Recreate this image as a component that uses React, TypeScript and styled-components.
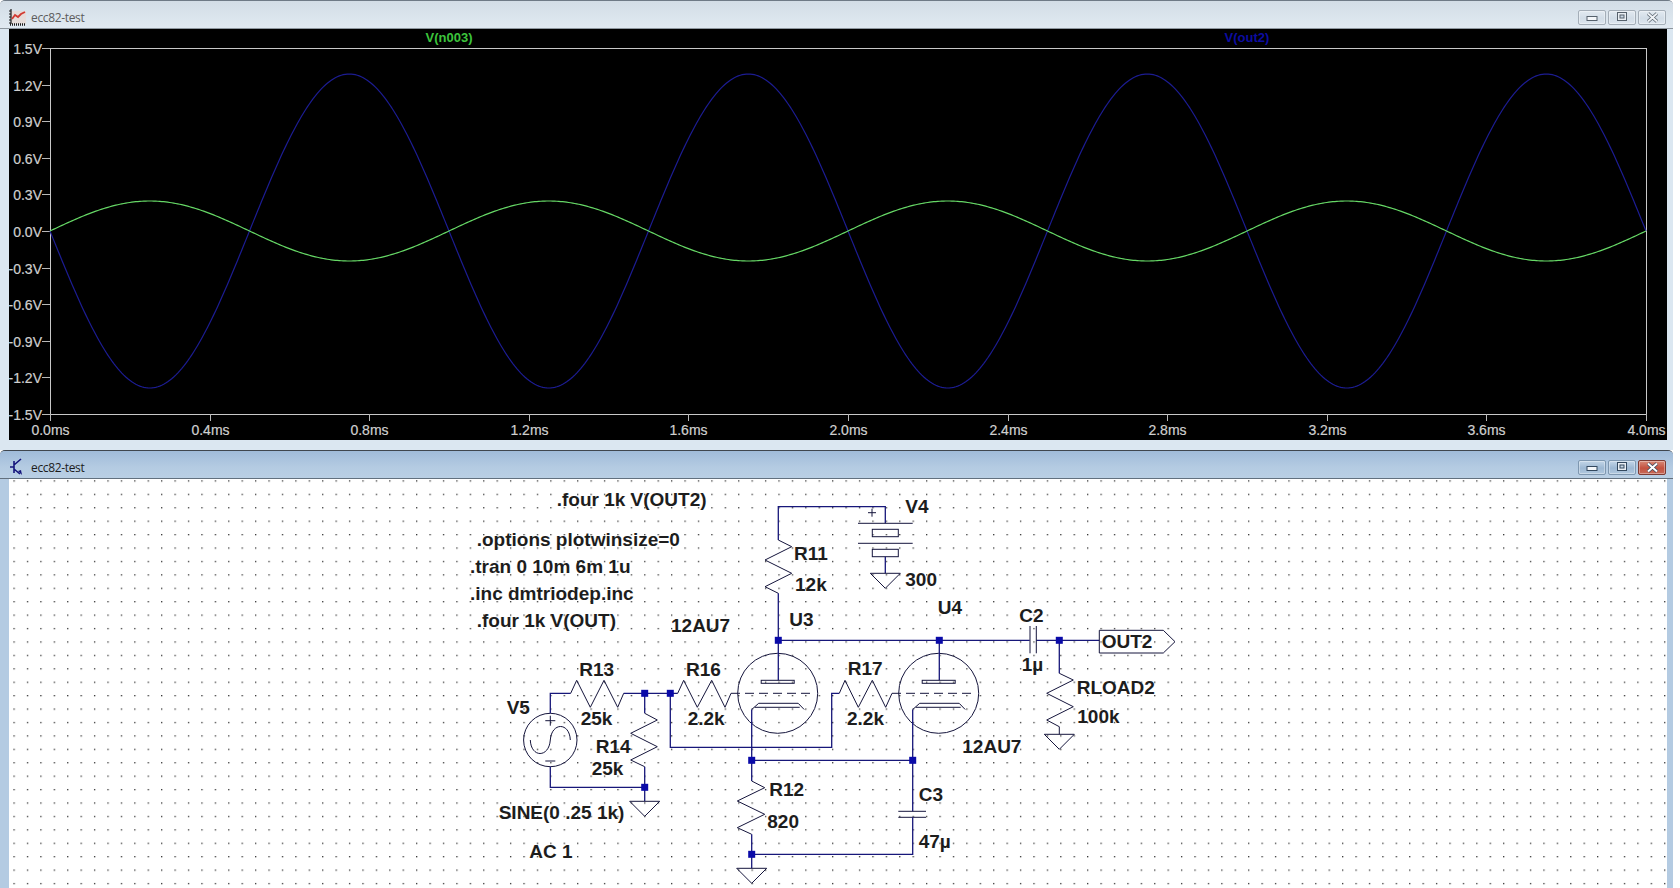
import React from "react";
import styled, { createGlobalStyle } from "styled-components";

const Global = createGlobalStyle`
  html, body { margin: 0; padding: 0; background: #fff; overflow: hidden; }
  #root { width: 1680px; height: 888px; }
`;

const Page = styled.div`
  width: 1680px; height: 888px; display: flex; flex-direction: column; overflow: hidden; background: #fff;
`;
const Win = styled.section<{ $active?: boolean; $h: number }>`
  width: 1673px; height: ${p => p.$h}px; flex: none; display: flex; flex-direction: column; box-sizing: border-box;
  border-top: 1px solid ${p => (p.$active ? "#3f464e" : "#6f7a86")};
  border-radius: 5px 5px 0 0;
  overflow: hidden;
  background: ${p => (p.$active ? "#b4cbe2" : "#dbe7f1")};
`;
const TitleBar = styled.header<{ $active?: boolean }>`
  height: 28px; flex: none; display: flex; align-items: center; box-sizing: border-box; padding: 5px 7px 0 9px;
  background: ${p => (p.$active
    ? "linear-gradient(#a0bbd9, #b4cbe2 60%, #b9cfe4)"
    : "linear-gradient(#d3dde6, #dce6ee 70%, #e0e9f1)")};
  border-bottom: 1px solid ${p => (p.$active ? "#62707e" : "#8e979f")};
`;
const TitleText = styled.span<{ $active?: boolean }>`
  font: 12px "Open Sans", "Noto Sans", sans-serif; letter-spacing: -0.35px; margin-left: 4px; flex: 1;
  color: ${p => (p.$active ? "#1c1c1c" : "#5c5c5c")};
`;
const Buttons = styled.div`display: flex; gap: 2px;`;
const WinButton = styled.div<{ $kind: string; $active?: boolean }>`
  width: 28px; height: 15px; box-sizing: border-box; border-radius: 2px;
  display: flex; align-items: center; justify-content: center;
  border: 1px solid ${p => (p.$kind === "close" && p.$active ? "#7d3a32" : p.$active ? "#7e97b0" : "#a4aeb8")};
  background: ${p => (p.$kind === "close" && p.$active
    ? "linear-gradient(#d88a78, #c4513f 55%, #c66a58)"
    : p.$active
      ? "linear-gradient(#c3d6e8, #9db8d3 55%, #b2c9df)"
      : "linear-gradient(#e2eaf1, #d2dde7 55%, #dde6ee)")};
  box-shadow: inset 0 0 0 1px rgba(255,255,255,.35);
`;
const Body = styled.div`
  flex: 1; min-height: 0; display: flex; padding: 0 6px 0 9px;
`;
const PlotPane = styled.div`
  width: 1658px; height: 411px; background: #000; flex: none;
`;
const SchematicPane = styled.div`
  width: 1658px; height: 409px; background: #fff; flex: none;
`;
const Drawing = styled.svg`display: block;`;

const Tick = styled.text<{ $anchor: string }>`
  font: 14px "Liberation Sans", Arial, sans-serif; fill: #cfcfcf; text-anchor: ${p => p.$anchor};
  stroke: #cfcfcf; stroke-width: 0.2;
`;
const TraceName = styled.text<{ $color: string }>`
  font: bold 13px "Liberation Sans", Arial, sans-serif; fill: ${p => p.$color}; text-anchor: middle;
`;
const Label = styled.text`
  font: bold 19px "Liberation Sans", Arial, sans-serif; fill: #1d1d1d;
`;
const WireLine = styled.polyline`fill: none; stroke: #17177a; stroke-width: 1.3;`;
const PartLine = styled.polyline<{ $dash?: boolean }>`
  fill: none; stroke: #15153c; stroke-width: 1; ${p => (p.$dash ? "stroke-dasharray: 9 5;" : "")}
`;
const PartRect = styled.rect`fill: none; stroke: #15153c; stroke-width: 1;`;
const PartCircle = styled.circle`fill: none; stroke: #15153c; stroke-width: 1;`;
const JunctionDot = styled.rect`fill: #0a0aa8;`;

type P = [number, number][];
const pts = (p: P) => p.map(a => a.join(",")).join(" ");
const Wire = ({ p }: { p: P }) => <WireLine points={pts(p)} />;
const Part = ({ p, dash }: { p: P; dash?: boolean }) => <PartLine points={pts(p)} $dash={dash} />;
const J = ({ x, y }: { x: number; y: number }) => <JunctionDot x={x - 3.5} y={y - 3.5} width={7} height={7} />;
const Gnd = ({ x, y }: { x: number; y: number }) => <Part p={[[x - 15, y], [x + 15, y], [x, y + 15], [x - 15, y]]} />;

const Tube = ({ cx, wireX, gridFrom }: { cx: number; wireX: number; gridFrom: number }) => {
  const y = 693.3;
  return (
    <g>
      <PartCircle cx={cx} cy={y} r={40} />
      <Wire p={[[cx + 0.6, 640.3], [cx + 0.6, 680.3]]} />
      <PartRect x={cx - 16.5} y={680.3} width={33} height={3} />
      <Part p={[[gridFrom, y], [cx + 33, y]]} dash />
      <Part p={[[wireX, 709.5], [wireX + 7, 703.3], [cx + 20.5, 703.3], [cx + 26.5, 709.5]]} />
      <Part p={[[wireX + 3, 707.3], [cx + 22, 707.3]]} />
    </g>
  );
};

const H = (x0: number, xs: number[], ys: number[]): P => xs.map((d, i) => [x0 + d, ys[i]]);

const labels: [string, number, number][] = [
  [".four 1k V(OUT2)", 556.7, 506],
  [".options plotwinsize=0", 476.7, 546],
  [".tran 0 10m 6m 1u", 470, 573.3],
  [".inc dmtriodep.inc", 470, 600],
  [".four 1k V(OUT)", 476.7, 627.3],
  ["12AU7", 671, 632],
  ["U3", 789.3, 625.7],
  ["R11", 794, 560],
  ["12k", 795, 590.7],
  ["R13", 579.3, 675.7],
  ["R16", 686, 675.7],
  ["R17", 847.7, 675],
  ["25k", 580.7, 725],
  ["2.2k", 687.7, 725],
  ["2.2k", 847, 725],
  ["V5", 506.7, 714],
  ["R14", 595.7, 753.3],
  ["25k", 591.7, 774.7],
  ["SINE(0 .25 1k)", 498.7, 819.3],
  ["AC 1", 529.3, 858.3],
  ["R12", 769.3, 796],
  ["820", 767.3, 827.7],
  ["C3", 918.7, 800.7],
  ["47µ", 918.7, 847.7],
  ["12AU7", 962.3, 753.3],
  ["V4", 905.3, 512.7],
  ["300", 905.3, 586],
  ["U4", 937.7, 614.3],
  ["C2", 1019.3, 621.7],
  ["OUT2", 1101.7, 647.7],
  ["1µ", 1021.7, 670.7],
  ["RLOAD2", 1076.7, 694],
  ["100k", 1077.3, 723.3],
];

const trace = (amp: number, sign: number) => {
  const out: string[] = [];
  for (let i = 0; i <= 800; i++) {
    const t = i / 200;
    out.push(`${(50 + 399 * t).toFixed(2)},${(231 - sign * amp * Math.sin(2 * Math.PI * t)).toFixed(2)}`);
  }
  return out.join(" ");
};

const PlotTrace = styled.polyline<{ $color: string; $w: number }>`fill: none; stroke: ${p => p.$color}; stroke-width: ${p => p.$w};`;
const AxisBox = styled.rect`fill: none; stroke: #c8c8c8; stroke-width: 1;`;
const AxisTick = styled.line`stroke: #b8b8b8; stroke-width: 1;`;

const yTicks = [1.5, 1.2, 0.9, 0.6, 0.3, 0, -0.3, -0.6, -0.9, -1.2, -1.5];
const xTicks = Array.from({ length: 11 }, (_, i) => i * 0.4);

const Plot = () => (
  <Drawing width={1658} height={411} viewBox="9 29 1658 411">
    <TraceName x={449} y={42} $color="#3cc43c">V(n003)</TraceName>
    <TraceName x={1247} y={42} $color="#0c0ca0">V(out2)</TraceName>
    <AxisBox x={50.5} y={48.5} width={1596} height={366} />
    {yTicks.map(v => {
      const y = Math.round(231 - v * 122) + 0.5;
      return (
        <g key={v}>
          <AxisTick x1={42} x2={50} y1={y} y2={y} />
          <Tick x={42} y={y + 5} $anchor="end">{v.toFixed(1)}V</Tick>
        </g>
      );
    })}
    {xTicks.map(v => {
      const x = Math.round(50 + v * 399) + 0.5;
      return (
        <g key={v}>
          <AxisTick x1={x} x2={x} y1={414} y2={421} />
          <Tick x={x} y={435} $anchor="middle">{v.toFixed(1)}ms</Tick>
        </g>
      );
    })}
    <PlotTrace points={trace(157, -1)} $color="#1c1c92" $w={1.2} />
    <PlotTrace points={trace(30, 1)} $color="#66d866" $w={1.2} />
  </Drawing>
);

const Schematic = () => (
  <Drawing width={1658} height={409} viewBox="9 479 1658 409">
    <defs>
      <pattern id="grid" x={0} y={480.3} width={13.42} height={13.42} patternUnits="userSpaceOnUse">
        <rect x={0} y={0} width={1.3} height={1.3} fill="#333" />
      </pattern>
    </defs>
    <rect x={9} y={479} width={1658} height={409} fill="url(#grid)" />

    {/* supply */}
    <Wire p={[[778.3, 540], [778.3, 506.7], [885.3, 506.7], [885.3, 523.3]]} />
    <Part p={[[858, 523.3], [912.7, 523.3]]} />
    <Part p={[[858, 543.3], [912.7, 543.3]]} />
    <PartRect x={872.3} y={529.3} width={26} height={7.4} />
    <PartRect x={872.3} y={549.3} width={26} height={7.4} />
    <Part p={[[868, 512.7], [876, 512.7]]} />
    <Part p={[[872, 508.7], [872, 516.7]]} />
    <Wire p={[[885.3, 556.7], [885.3, 573.3]]} />
    <Gnd x={885.3} y={573.3} />

    {/* R11 */}
    <Part p={[[778.3, 540], [791.7, 546.7], [765, 560], [791.7, 573.3], [765, 586.7], [778.3, 593.3]]} />
    <Wire p={[[778.3, 593.3], [778.3, 640.3]]} />

    {/* plate bus to output */}
    <Wire p={[[778.3, 640.3], [1029.7, 640.3]]} />
    <Wire p={[[1036.3, 640.3], [1099.3, 640.3]]} />
    <Part p={[[1030, 626], [1030, 653.3]]} />
    <Part p={[[1036.3, 626], [1036.3, 653.3]]} />
    <Part p={[[1099.3, 630.3], [1163.3, 630.3], [1175, 641.7], [1163.3, 653], [1099.3, 653], [1099.3, 630.3]]} />

    {/* RLOAD2 */}
    <Wire p={[[1059.3, 640.3], [1059.3, 673.3]]} />
    <Part p={[[1059.3, 673.3], [1073.3, 680], [1046.7, 693.3], [1073.3, 706.7], [1046.7, 720], [1059.3, 726.7], [1059.3, 734.3]]} />
    <Gnd x={1059.3} y={734.3} />

    {/* input */}
    <PartCircle cx={550.3} cy={740} r={26.7} />
    <Part p={[[545.3, 720.7], [555.3, 720.7]]} />
    <Part p={[[550.3, 715.7], [550.3, 725.7]]} />
    <Part p={[[545.3, 761], [555.3, 761]]} />
    <path d="M530.3 740 C531 758 549 758 550.3 740 C551.6 722 569.6 722 570.3 740" fill="none" stroke="#15153c" strokeWidth={1} />
    <Wire p={[[550.3, 713.3], [550.3, 693.3], [570.7, 693.3]]} />
    <Part p={[[570.7, 693.3], [576.7, 680.3], [590.3, 707.3], [604, 680.3], [617.7, 707.3], [623.7, 693.3]]} />
    <Wire p={[[623.7, 693.3], [677.7, 693.3]]} />
    <Wire p={[[644.7, 693.3], [644.7, 713.3]]} />
    <Part p={[[644.7, 713.3], [657.3, 720], [630.7, 733.3], [657.3, 746.7], [630.7, 760], [644.7, 766.7]]} />
    <Wire p={[[644.7, 766.7], [644.7, 801.3]]} />
    <Wire p={[[550.3, 766.7], [550.3, 787.3], [644.7, 787.3]]} />
    <Gnd x={644.7} y={801.3} />

    {/* R16, R17 */}
    <Part p={H(0, [677.7, 683.7, 697.3, 711.7, 725, 731], [693.3, 680.3, 707.3, 680.3, 707.3, 693.3])} />
    <Wire p={[[670.3, 693.3], [670.3, 747.3], [831.7, 747.3], [831.7, 693.3], [839.3, 693.3]]} />
    <Part p={H(0, [839.3, 845, 858.3, 872.3, 885.7, 892], [693.3, 680.3, 707.3, 680.3, 707.3, 693.3])} />

    <Tube cx={777.7} wireX={751.7} gridFrom={731} />
    <Tube cx={938.7} wireX={912.7} gridFrom={892} />

    {/* cathodes */}
    <Wire p={[[751.7, 709.5], [751.7, 781]]} />
    <Wire p={[[751.7, 760.3], [912.7, 760.3]]} />
    <Wire p={[[912.7, 709.5], [912.7, 811.3]]} />
    <Part p={[[898.3, 811.3], [926, 811.3]]} />
    <Part p={[[898.3, 817.3], [926, 817.3]]} />
    <Wire p={[[912.7, 817.3], [912.7, 854.3], [751.7, 854.3]]} />
    <Part p={[[751.7, 781], [764.7, 787.7], [737.3, 801], [764.7, 814.3], [737.3, 827.7], [751.7, 834.3]]} />
    <Wire p={[[751.7, 834.3], [751.7, 868.3]]} />
    <Gnd x={751.7} y={868.3} />

    {([[778.3, 640.3], [939.3, 640.3], [1059.3, 640.3], [644.7, 693.3], [670.3, 693.3], [751.7, 760.3], [912.7, 760.3], [751.7, 854.3], [644.7, 787.3]] as P).map(([x, y]) => (
      <J key={`${x}-${y}`} x={x} y={y} />
    ))}

    {labels.map(([t, x, y], i) => (
      <Label key={i} x={x} y={y}>{t}</Label>
    ))}
  </Drawing>
);

const PlotIcon = () => (
  <svg width="18" height="18" viewBox="0 0 18 18">
    <rect x="2" y="3" width="15" height="13" fill="#e9d9d2" opacity="0.7" />
    <path d="M2 1v15M0 3h2M0 6h2M0 9h2M0 12h2M0 15h2" stroke="#1c1c1c" strokeWidth="1.2" fill="none" />
    <path d="M1 16.5h16" stroke="#1c1c1c" strokeDasharray="1 1" strokeWidth="2.4" fill="none" />
    <path d="M3 11l3-4 3 2 3-3 4-2" stroke="#d23a32" strokeWidth="1.8" fill="none" />
  </svg>
);
const TransistorIcon = () => (
  <svg width="18" height="18" viewBox="0 0 18 18">
    <path d="M5 3v12M1 9h4M5 7l7-6M5 11l6 5" stroke="#14147c" strokeWidth="1.6" fill="none" />
    <path d="M9 13l4 4-1-5z" fill="#14147c" />
  </svg>
);

const Glyph = ({ kind, active }: { kind: string; active?: boolean }) => {
  const dark = active ? "#33485e" : "#56616c";
  if (kind === "min") return <svg width="12" height="7" viewBox="0 0 12 7"><rect x="1" y="2.5" width="10" height="4" fill="#f4f7fa" stroke={dark} /></svg>;
  if (kind === "max") return <svg width="12" height="10" viewBox="0 0 12 10"><rect x="1.5" y="0.5" width="9" height="8" fill="#e9eef3" stroke={dark} /><rect x="4" y="3" width="4" height="3" fill="#c8d6e3" stroke={dark} /></svg>;
  return (
    <svg width="13" height="11" viewBox="0 0 13 11">
      <path d="M2 1.5l9 8M11 1.5l-9 8" stroke={dark} strokeWidth="3.4" fill="none" />
      <path d="M2 1.5l9 8M11 1.5l-9 8" stroke={active ? "#fff" : "#eef2f6"} strokeWidth="2" fill="none" />
    </svg>
  );
};

const Window = ({ active, h, icon, children }: { active?: boolean; h: number; icon: React.ReactNode; children: React.ReactNode }) => (
  <Win $active={active} $h={h}>
    <TitleBar $active={active}>
      {icon}
      <TitleText $active={active}>ecc82-test</TitleText>
      <Buttons>
        {["min", "max", "close"].map(k => (
          <WinButton key={k} $kind={k} $active={active}><Glyph kind={k} active={active} /></WinButton>
        ))}
      </Buttons>
    </TitleBar>
    <Body>{children}</Body>
  </Win>
);

export default function App() {
  return (
    <Page>
      <Global />
      <Window h={450} icon={<PlotIcon />}>
        <PlotPane><Plot /></PlotPane>
      </Window>
      <Window active h={438} icon={<TransistorIcon />}>
        <SchematicPane><Schematic /></SchematicPane>
      </Window>
    </Page>
  );
}
